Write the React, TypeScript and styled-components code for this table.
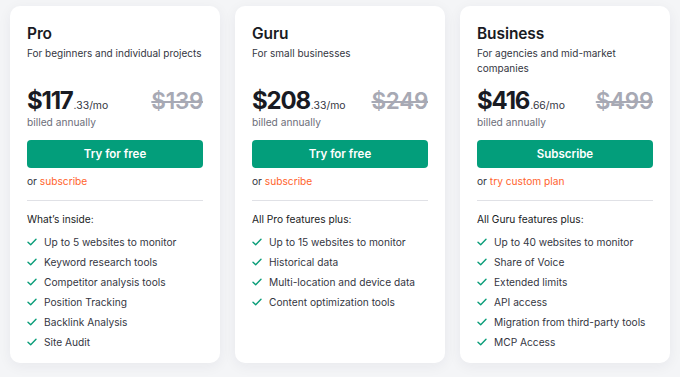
import React from "react";
import styled, { createGlobalStyle } from "styled-components";

const Global = createGlobalStyle`
  html, body { margin: 0; padding: 0; background: #f4f5f7; }
  body { font-family: Inter, "Noto Sans", sans-serif; color: #191b23; -webkit-font-smoothing: antialiased; }
`;

const Page = styled.div`
  width: 680px;
  height: 377px;
  box-sizing: border-box;
  padding: 6px 10px 0 10px;
  display: grid;
  grid-template-columns: repeat(3, 210px);
  column-gap: 15px;
  align-items: start;
  background: #f4f5f7;
`;

const Card = styled.div`
  height: 357px;
  box-sizing: border-box;
  background: #fff;
  border-radius: 10px;
  box-shadow: 0 3px 14px rgba(30, 35, 60, 0.06);
  padding: 17px 17px 0 17px;
  display: flex;
  flex-direction: column;
`;

const Title = styled.div`
  font-size: 15.5px;
  line-height: 22px;
  font-weight: 600;
  letter-spacing: -0.1px;
`;

const Desc = styled.div`
  margin-top: 1px;
  height: 30px;
  font-size: 10px;
  line-height: 15px;
  color: #34363f;
`;

const PriceRow = styled.div`
  margin-top: 11px;
  display: flex;
  align-items: baseline;
  justify-content: space-between;
  height: 28px;
`;

const Price = styled.div`
  font-size: 24px;
  font-weight: 700;
  letter-spacing: -1.2px;
  line-height: 28px;
  display: flex;
  align-items: baseline;
`;

const Cents = styled.span`
  font-size: 10.4px;
  font-weight: 400;
  letter-spacing: 0;
  color: #34363f;
  margin-left: 1px;
`;

const OldPrice = styled.span`
  font-size: 22.5px;
  font-weight: 600;
  letter-spacing: -0.3px;
  color: #a7a9b4;
  text-decoration: line-through;
  text-decoration-thickness: 2px;
`;

const Billed = styled.div`
  font-size: 10.2px;
  line-height: 14px;
  color: #6c6e79;
`;

const Button = styled.button`
  margin-top: 11px;
  height: 28px;
  border: none;
  border-radius: 4px;
  background: #039e7b;
  color: #fff;
  font-family: Inter, sans-serif;
  font-size: 11.5px;
  font-weight: 600;
  cursor: pointer;
`;

const OrLine = styled.div`
  margin-top: 6px;
  font-size: 10.2px;
  line-height: 15px;
  color: #34363f;
`;

const OrLink = styled.a`
  color: #ff642d;
  text-decoration: none;
`;

const Divider = styled.hr`
  margin: 11px 0 0 0;
  border: none;
  border-top: 1px solid #e0e1e6;
`;

const ListTitle = styled.div`
  margin-top: 11px;
  font-size: 10.2px;
  line-height: 15px;
  color: #191b23;
`;

const Features = styled.ul`
  list-style: none;
  margin: 5px 0 0 0;
  padding: 0;
  display: flex;
  flex-direction: column;
`;

const Feature = styled.li`
  display: flex;
  align-items: center;
  gap: 7px;
  height: 20px;
  font-size: 10.2px;
  color: #34363f;
`;

const Check = () => (
  <svg width="10" height="8" viewBox="0 0 10 8" fill="none">
    <path d="M1 4.2 L3.7 6.8 L9 1.3" stroke="#0a9d79" strokeWidth="1.4" strokeLinecap="round" strokeLinejoin="round" />
  </svg>
);

type Plan = {
  name: string;
  desc: string;
  price: string;
  cents: string;
  old: string;
  cta: string;
  orText: string;
  listTitle: string;
  features: string[];
};

const plans: Plan[] = [
  {
    name: "Pro",
    desc: "For beginners and individual projects",
    price: "$117",
    cents: ".33/mo",
    old: "$139",
    cta: "Try for free",
    orText: "subscribe",
    listTitle: "What’s inside:",
    features: [
      "Up to 5 websites to monitor",
      "Keyword research tools",
      "Competitor analysis tools",
      "Position Tracking",
      "Backlink Analysis",
      "Site Audit",
    ],
  },
  {
    name: "Guru",
    desc: "For small businesses",
    price: "$208",
    cents: ".33/mo",
    old: "$249",
    cta: "Try for free",
    orText: "subscribe",
    listTitle: "All Pro features plus:",
    features: [
      "Up to 15 websites to monitor",
      "Historical data",
      "Multi-location and device data",
      "Content optimization tools",
    ],
  },
  {
    name: "Business",
    desc: "For agencies and mid-market companies",
    price: "$416",
    cents: ".66/mo",
    old: "$499",
    cta: "Subscribe",
    orText: "try custom plan",
    listTitle: "All Guru features plus:",
    features: [
      "Up to 40 websites to monitor",
      "Share of Voice",
      "Extended limits",
      "API access",
      "Migration from third-party tools",
      "MCP Access",
    ],
  },
];

export default function App() {
  return (
    <>
      <Global />
      <Page>
        {plans.map((p) => (
          <Card key={p.name}>
            <Title>{p.name}</Title>
            <Desc>{p.desc}</Desc>
            <PriceRow>
              <Price>
                {p.price}
                <Cents>{p.cents}</Cents>
              </Price>
              <OldPrice>{p.old}</OldPrice>
            </PriceRow>
            <Billed>billed annually</Billed>
            <Button>{p.cta}</Button>
            <OrLine>
              or <OrLink href="#">{p.orText}</OrLink>
            </OrLine>
            <Divider />
            <ListTitle>{p.listTitle}</ListTitle>
            <Features>
              {p.features.map((f) => (
                <Feature key={f}>
                  <Check />
                  {f}
                </Feature>
              ))}
            </Features>
          </Card>
        ))}
      </Page>
    </>
  );
}
